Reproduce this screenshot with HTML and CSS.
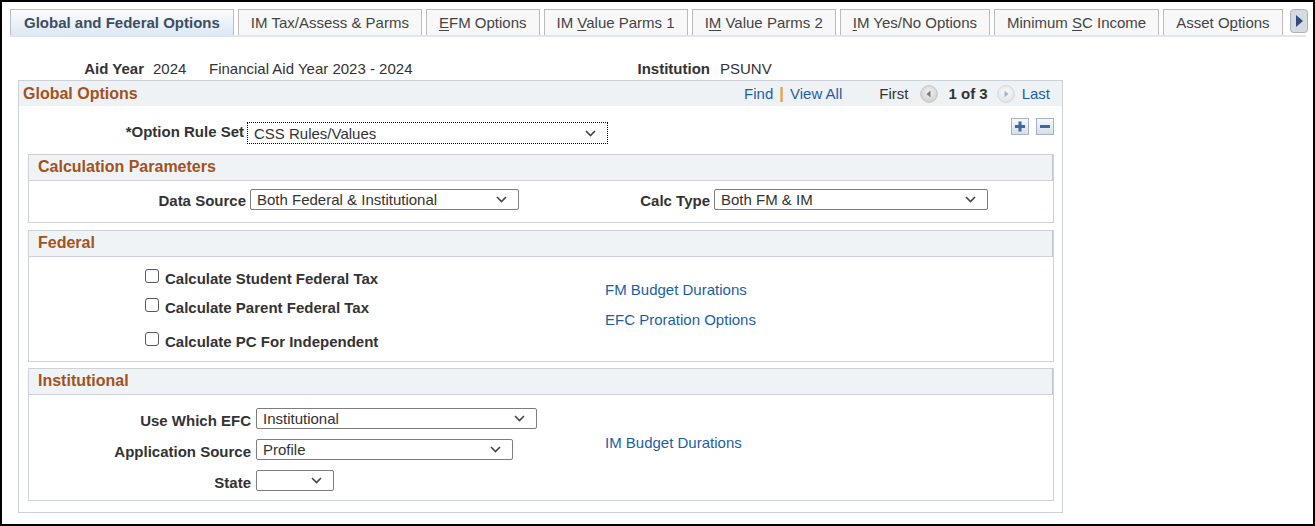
FILE: index.html
```html
<!DOCTYPE html>
<html>
<head>
<meta charset="utf-8">
<link rel="stylesheet" href="styles.css">
</head>
<body>
<div class="frame">
  <div class="tabs">
    <div class="tab active">Global and Federal Options</div>
    <div class="tab">IM Tax/Assess &amp; Parms</div>
    <div class="tab"><u>E</u>FM Options</div>
    <div class="tab">IM <u>V</u>alue Parms 1</div>
    <div class="tab">I<u>M</u> Value Parms 2</div>
    <div class="tab"><u>I</u>M Yes/No Options</div>
    <div class="tab">Minimum <u>S</u>C Income</div>
    <div class="tab">Asset O<u>p</u>tions</div>
    <div class="tab-scroll">
      <svg width="18" height="24" viewBox="0 0 18 24"><rect x="0.5" y="0.5" width="17" height="23" rx="3" fill="#d6dbe1" stroke="#aab2bc"/><polygon points="6,6 13,12 6,18" fill="#2e4c7c"/></svg>
    </div>
  </div>

  <div class="info">
    <span class="k1">Aid Year</span>
    <span class="v1">2024</span>
    <span class="v2">Financial Aid Year 2023 - 2024</span>
    <span class="k2">Institution</span>
    <span class="v3">PSUNV</span>
  </div>

  <div class="gbox">
    <div class="ghead">
      <span class="gtitle">Global Options</span>
      <div class="nav">
        <a class="lnk">Find</a><span class="pipe">|</span><a class="lnk">View All</a>
        <span class="first">First</span>
        <svg class="circ" width="18" height="18" viewBox="0 0 18 18"><defs><radialGradient id="g1" cx="50%" cy="40%" r="60%"><stop offset="0" stop-color="#f4f4f4"/><stop offset="1" stop-color="#cfcfcf"/></radialGradient></defs><circle cx="9" cy="9" r="8.3" fill="url(#g1)" stroke="#c3c3c3"/><polygon points="10.5,5.5 6.5,9 10.5,12.5" fill="#7a7a7a"/></svg>
        <span class="count">1 of 3</span>
        <svg class="circ" width="18" height="18" viewBox="0 0 18 18"><defs><radialGradient id="g2" cx="50%" cy="40%" r="60%"><stop offset="0" stop-color="#fbfbfb"/><stop offset="1" stop-color="#e2e4e6"/></radialGradient></defs><circle cx="9" cy="9" r="8.3" fill="url(#g2)" stroke="#d3d6d9"/><polygon points="7.5,5.5 11.5,9 7.5,12.5" fill="#9db6d6"/></svg>
        <span class="last">Last</span>
      </div>
    </div>

    <div class="rule-row">
      <span class="rlabel">*Option Rule Set</span>
      <div class="sel focus w361"><span>CSS Rules/Values</span><svg class="chev" width="11" height="7" viewBox="0 0 11 7"><polyline points="1,1 5.5,5.5 10,1" fill="none" stroke="#444" stroke-width="1.6"/></svg></div>
      <div class="pm">
        <svg width="18" height="17" viewBox="0 0 18 17"><defs><linearGradient id="b1" x1="0" y1="0" x2="0" y2="1"><stop offset="0" stop-color="#f7f9fb"/><stop offset="1" stop-color="#d8dee6"/></linearGradient></defs><rect x="0.5" y="0.5" width="17" height="16" fill="url(#b1)" stroke="#a6b2c0"/><rect x="4" y="7" width="10" height="3" fill="#3a6aa6"/><rect x="7.5" y="3.5" width="3" height="10" fill="#3a6aa6"/></svg>
        <svg width="18" height="17" viewBox="0 0 18 17"><rect x="0.5" y="0.5" width="17" height="16" fill="url(#b1)" stroke="#a6b2c0"/><rect x="4" y="7" width="10" height="3" fill="#3a6aa6"/></svg>
      </div>
    </div>

    <div class="sub calc">
      <div class="shead">Calculation Parameters</div>
      <div class="calc-body">
        <span class="lbl w217">Data Source</span>
        <div class="sel w269"><span>Both Federal &amp; Institutional</span><svg class="chev" width="11" height="7" viewBox="0 0 11 7"><polyline points="1,1 5.5,5.5 10,1" fill="none" stroke="#444" stroke-width="1.6"/></svg></div>
        <span class="lbl w191">Calc Type</span>
        <div class="sel w274"><span>Both FM &amp; IM</span><svg class="chev" width="11" height="7" viewBox="0 0 11 7"><polyline points="1,1 5.5,5.5 10,1" fill="none" stroke="#444" stroke-width="1.6"/></svg></div>
      </div>
    </div>

    <div class="sub fed">
      <div class="shead">Federal</div>
      <div class="fed-body">
        <div class="checks">
          <label class="chk r1"><span class="box"></span>Calculate Student Federal Tax</label>
          <label class="chk r2"><span class="box"></span>Calculate Parent Federal Tax</label>
          <label class="chk r3"><span class="box"></span>Calculate PC For Independent</label>
        </div>
        <div class="links">
          <a class="lnk">FM Budget Durations</a>
          <a class="lnk">EFC Proration Options</a>
        </div>
      </div>
    </div>

    <div class="sub inst">
      <div class="shead">Institutional</div>
      <div class="inst-body">
        <div class="irows">
          <div class="irow"><span class="lbl w222">Use Which EFC</span><div class="sel w281"><span>Institutional</span><svg class="chev" width="11" height="7" viewBox="0 0 11 7"><polyline points="1,1 5.5,5.5 10,1" fill="none" stroke="#444" stroke-width="1.6"/></svg></div></div>
          <div class="irow"><span class="lbl w222">Application Source</span><div class="sel w257"><span>Profile</span><svg class="chev" width="11" height="7" viewBox="0 0 11 7"><polyline points="1,1 5.5,5.5 10,1" fill="none" stroke="#444" stroke-width="1.6"/></svg></div></div>
          <div class="irow"><span class="lbl w222">State</span><div class="sel w78"><span></span><svg class="chev" width="11" height="7" viewBox="0 0 11 7"><polyline points="1,1 5.5,5.5 10,1" fill="none" stroke="#444" stroke-width="1.6"/></svg></div></div>
        </div>
        <div class="ilinks">
          <a class="lnk">IM Budget Durations</a>
        </div>
      </div>
    </div>
  </div>
</div>
</body>
</html>
```

FILE: styles.css
```css
* { box-sizing: border-box; }
html, body { margin: 0; padding: 0; background: #fff; }
body {
  font-family: "Liberation Sans", Arial, sans-serif;
  font-size: 15px;
  color: #333;
}
.frame {
  width: 1315px;
  height: 526px;
  border: 2px solid #000;
  background: #fff;
  overflow: hidden;
}

/* tabs */
.tabs {
  display: flex;
  align-items: flex-end;
  gap: 4px;
  margin: 7px 7px 0 8px;
  border-bottom: 2px solid #dde6f1;
  height: 28px;
}
.tab {
  height: 26px;
  padding: 0 12px;
  border: 1px solid #bcbcbc;
  border-bottom: none;
  background: #f8f8f8;
  color: #444;
  line-height: 25px;
  white-space: nowrap;
}
.tab u { text-decoration: underline; text-underline-offset: 2px; }
.tab.active {
  font-weight: bold;
  color: #3d4d60;
  padding: 0 13px;
  border-color: #b6c0cc;
  background: linear-gradient(#fafcfe, #dde8f4);
}
.tab-scroll {
  height: 26px;
  margin-left: 3px;
  display: flex;
  align-items: flex-start;
}

/* info row */
.info {
  display: flex;
  align-items: center;
  height: 23px;
  margin-top: 20px;
}
.k1 { width: 142px; text-align: right; font-weight: bold; }
.v1 { margin-left: 9px; width: 56px; }
.v2 { width: 390px; }
.k2 { width: 111px; text-align: right; font-weight: bold; }
.v3 { margin-left: 10px; }

/* global box */
.gbox {
  margin-left: 16px;
  width: 1045px;
  height: 433px;
  border: 1px solid #cdd2d8;
}
.ghead {
  display: flex;
  align-items: center;
  justify-content: space-between;
  height: 25px;
  background: #eff2f4;
  padding: 0 12px 0 4px;
}
.gtitle, .shead {
  font-size: 16px;
  font-weight: bold;
  color: #a2521d;
}
.nav { display: flex; align-items: center; }
.lnk { color: #1b5ea6; text-decoration: none; }
.pipe { color: #e6a23c; font-weight: bold; margin: 0 6px; font-size: 17px; }
.first { margin-left: 37px; margin-right: 12px; color: #333; }
.circ { display: block; }
.count { font-weight: bold; margin: 0 9px 0 10px; }
.last { margin-left: 7px; color: #1b5ea6; }

.rule-row {
  display: flex;
  align-items: flex-start;
  padding: 12px 8px 0 0;
  height: 48px;
}
.rlabel {
  width: 225px;
  text-align: right;
  font-weight: bold;
  margin-top: 5px;
  margin-right: 3px;
}
.rule-row .sel { margin-top: 4px; height: 22px; }
.pm { margin-left: auto; display: flex; gap: 7px; }
.pm svg { display: block; }

/* selects */
.sel {
  display: flex;
  align-items: center;
  justify-content: space-between;
  height: 21px;
  border: 1px solid #7d7d7d;
  border-radius: 2px;
  padding: 0 11px 0 6px;
  color: #333;
  background: #fff;
  white-space: nowrap;
}
.sel.focus { border: 1px dotted #000; border-radius: 0; }
.chev { display: block; flex: none; }
.w361 { width: 361px; }
.w269 { width: 269px; }
.w274 { width: 274px; }
.w281 { width: 281px; }
.w257 { width: 257px; }
.w78 { width: 78px; }

.lbl { text-align: right; font-weight: bold; }
.w217 { width: 217px; margin-right: 4px; }
.w191 { width: 191px; margin-right: 4px; }
.w222 { width: 222px; margin-right: 5px; }

/* sub boxes */
.sub {
  margin: 0 8px 0 9px;
  border: 1px solid #cdd2d8;
}
.shead {
  height: 26px;
  line-height: 23px;
  padding-left: 9px;
  background: #f0f3f5;
  border-bottom: 1px solid #cdd2d8;
  border-right: 1px solid #c3c8ce;
}
.calc { height: 69px; }
.calc-body {
  display: flex;
  align-items: center;
  padding-top: 8px;
}
.calc-body .lbl { padding-top: 2px; }

.fed { margin-top: 7px; height: 132px; }
.fed-body {
  display: grid;
  grid-template-columns: 576px 1fr;
}
.checks {
  display: flex;
  flex-direction: column;
  padding: 11px 0 0 116px;
}
.chk {
  display: flex;
  align-items: center;
  height: 20px;
  font-weight: bold;
}
.r2 { margin-top: 9px; }
.r3 { margin-top: 14px; }
.box {
  width: 14px;
  height: 14px;
  border: 1px solid #5b5b5b;
  border-radius: 3px;
  background: #fff;
  margin-right: 6px;
  margin-top: -5px;
}
.links {
  display: flex;
  flex-direction: column;
  gap: 10px;
  padding-top: 23px;
}
.links .lnk { line-height: 20px; }

.inst { margin-top: 6px; height: 133px; }
.inst-body {
  display: grid;
  grid-template-columns: 576px 1fr;
}
.irows {
  display: flex;
  flex-direction: column;
  gap: 10px;
  padding-top: 13px;
}
.irow { display: flex; align-items: center; height: 21px; }
.irow .lbl { padding-top: 3px; }
.ilinks { padding-top: 38px; }
.ilinks .lnk { line-height: 20px; }
```
